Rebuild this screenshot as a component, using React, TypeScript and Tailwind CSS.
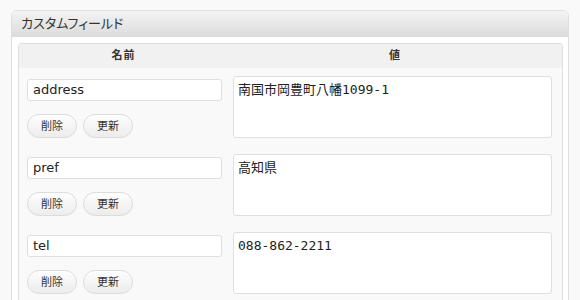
import React from "react";

const rows = [
  { name: "address", value: "南国市岡豊町八幡1099-1" },
  { name: "pref", value: "高知県" },
  { name: "tel", value: "088-862-2211" },
];

const jp = { fontFamily: '"DejaVu Sans", "Noto Sans CJK JP", sans-serif' };
const mono = { fontFamily: '"DejaVu Sans Mono", "Noto Sans CJK JP", monospace' };

function Btn({ label }: { label: string }) {
  return (
    <button
      className="h-[24px] rounded-full border border-[#dcdcdc] bg-gradient-to-b from-[#fefefe] to-[#ececec] px-[13px] text-[11px] leading-none text-[#333]"
      style={jp}
    >
      {label}
    </button>
  );
}

export default function App() {
  return (
    <div className="h-[300px] w-[580px] overflow-hidden bg-[#f9f9f9] pl-[11px] pt-[10px]" style={jp}>
      <div className="w-[558px] rounded-t-[6px] border border-[#dfdfdf] bg-white">
        <div className="flex h-[26px] items-center rounded-t-[6px] bg-gradient-to-b from-[#f3f3f3] to-[#dcdcdc] pl-[9px] text-[13px] text-[#333] [font-feature-settings:'palt']">
          カスタムフィールド
        </div>
        <div className="pl-[6px] pr-[5px] pt-[6px]">
          <div className="rounded-[3px] border border-[#dfdfdf] bg-[#f9f9f9]">
            <div className="flex h-[24px] items-center bg-[#f1f1f1] text-[11px] font-bold tracking-[1px] text-[#333]">
              <div className="w-[209px] text-center">名前</div>
              <div className="flex-1 text-center">値</div>
            </div>
            {rows.map((r) => (
              <div key={r.name} className="flex pb-[8px] pt-[8px]">
                <div className="w-[209px] pl-[8px] pt-[3px]">
                  <div className="flex h-[22px] w-[195px] items-center rounded-[3px] border border-[#dfdfdf] bg-white pl-[5px] text-[13px] text-[#222]">
                    {r.name}
                  </div>
                  <div className="mt-[13px] flex gap-[6px]">
                    <Btn label="削除" />
                    <Btn label="更新" />
                  </div>
                </div>
                <div className="flex-1 pl-[5px] pr-[10px]">
                  <div
                    className="h-[62px] rounded-[3px] border border-[#dfdfdf] bg-white pl-[4px] pt-[3px] text-[13px] text-[#222]"
                    style={mono}
                  >
                    {r.value}
                  </div>
                </div>
              </div>
            ))}
          </div>
        </div>
      </div>
    </div>
  );
}
